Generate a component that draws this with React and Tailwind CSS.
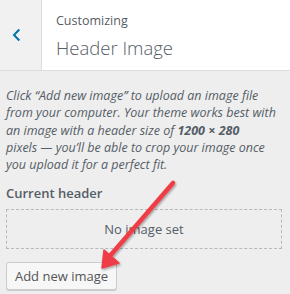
export default function App() {
  return (
    <div className="w-[290px] h-[294px] bg-[#eeeeee] overflow-hidden relative font-['Open_Sans',sans-serif] text-[#555d66]">
      <div className="flex h-[71px] bg-white border-b border-[#dddddd]">
        <div className="w-[42px] bg-[#f1f1f1] border-r border-[#dddddd] flex items-center pl-[12px]">
          <svg width="10" height="14" viewBox="0 0 10 14">
            <path d="M7.3 1.5 L2 7 L7.3 12.5" fill="none" stroke="#0073aa" strokeWidth="2" />
          </svg>
        </div>
        <div className="pl-[14px] pt-[12px]">
          <div className="text-[12.5px] leading-[18px]">Customizing</div>
          <div className="text-[18.5px] font-light leading-[26px] mt-[5px]">Header Image</div>
        </div>
      </div>

      <div className="pl-[6px] pr-[8px] pt-[16px]">
        <p className="w-[278px] text-[12.5px] italic leading-[17.25px]">
          Click “Add new image” to upload an image file from your computer. Your theme works best with an image with a header size of <strong>1200 × 280</strong>
          <br />
          pixels — you’ll be able to crop your image once you upload it for a perfect fit.
        </p>
        <div className="text-[13px] font-semibold mt-[11px] leading-[18px]">Current header</div>
        <div className="mt-[7px] h-[40px] border border-dashed border-[#b4b9be] flex items-center justify-center text-[13px]">
          No image set
        </div>
        <button className="mt-[13px] h-[28px] w-[111px] bg-[#f7f7f7] border border-[#cccccc] rounded-[3px] shadow-[0_1px_0_#cccccc] text-[13px] text-[#555555] leading-[26px]">
          Add new image
        </button>
      </div>

      <svg className="absolute left-0 top-0" width="290" height="294" viewBox="0 0 290 294">
        <defs>
          <filter id="sh" x="-20%" y="-20%" width="140%" height="140%">
            <feDropShadow dx="1" dy="1.5" stdDeviation="1" floodColor="#000" floodOpacity="0.35" />
          </filter>
        </defs>
        <g filter="url(#sh)">
          <line x1="173" y1="183" x2="109" y2="257" stroke="#ee3e47" strokeWidth="4.5" strokeLinecap="round" />
          <polygon points="102,268 104,250 119,263" fill="#ee3e47" stroke="#ee3e47" strokeWidth="1.5" strokeLinejoin="round" />
        </g>
      </svg>
    </div>
  )
}
